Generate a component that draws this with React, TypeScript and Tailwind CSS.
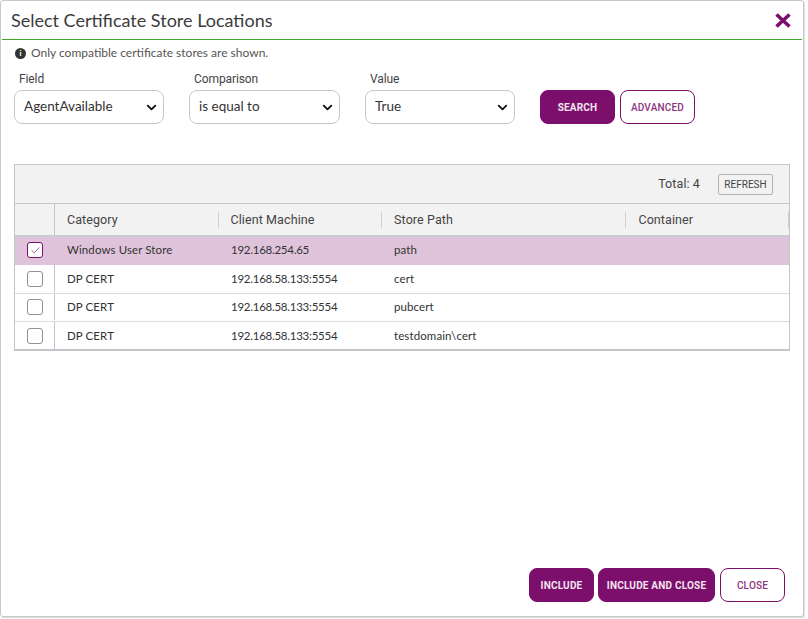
import { ChevronDown, Check } from "lucide-react";

const rows = [
  { category: "Windows User Store", machine: "192.168.254.65", path: "path", selected: true },
  { category: "DP CERT", machine: "192.168.58.133:5554", path: "cert", selected: false },
  { category: "DP CERT", machine: "192.168.58.133:5554", path: "pubcert", selected: false },
  { category: "DP CERT", machine: "192.168.58.133:5554", path: "testdomain\\cert", selected: false },
];

const rowHeights = ["h-[28px] pb-[2px]", "h-[29px] pb-[1px]", "h-[28px] pb-[1px]", "h-[27px]"];

const body = "font-['Lato',sans-serif]";
const narrow = "font-['Roboto',sans-serif]";

function Filter({ label, value, width, gap }: { label: string; value: string; width: string; gap: string }) {
  return (
    <div className={`${width} ${gap} shrink-0`}>
      <div className={`${narrow} h-[20px] pl-[5px] pt-[1px] text-[12px] leading-[16px] tracking-[-0.1px] text-[#444]`}>{label}</div>
      <div className={`${body} flex h-[34px] items-center justify-between rounded-[8px] border border-[#c8c8c8] bg-white pb-[2px] pl-[9px] pr-[4px] text-[13.5px] text-[#333]`}>
        <span>{value}</span>
        <ChevronDown size={15} strokeWidth={3} className="mt-[2px] text-[#111]" />
      </div>
    </div>
  );
}

function Button({ label, solid, width }: { label: string; solid?: boolean; width: string }) {
  return (
    <button
      className={`${narrow} ${width} h-[34px] rounded-[8px] border border-[#7d0f6c] text-[10px] tracking-[0.2px] ${
        solid ? "bg-[#7d0f6c] font-bold text-[#f3e4f0]" : "bg-white font-medium text-[#8f3480]"
      }`}
    >
      {label}
    </button>
  );
}

export default function App() {
  return (
    <div className="h-[619px] w-[808px] overflow-hidden bg-white">
      <div className="flex h-[617px] w-[804px] flex-col rounded-[3px] border border-[#c8c8c8] bg-white shadow-[1px_1px_1px_#dddddd]">
        <div className="mx-[1px] flex h-[39px] shrink-0 items-center justify-between border-b border-[#3fa82a] pl-[9px] pr-[11px]">
          <h1 className={`${body} text-[18px] text-[#3c3c3c]`}>Select Certificate Store Locations</h1>
          <svg width="16" height="15" viewBox="0 0 16 15">
            <path d="M1.5 1.5 L14.5 13.5 M14.5 1.5 L1.5 13.5" stroke="#7d0f6c" strokeWidth="3.6" />
          </svg>
        </div>

        <div className="flex min-h-0 flex-1 flex-col pl-[13px] pr-[13px]">
          <div className={`${body} mt-[5px] flex h-[16px] items-center gap-[5px] pl-[1px] text-[12px] text-[#555]`}>
            <span className="flex h-[11px] w-[11px] items-center justify-center rounded-full bg-[#333] text-[8px] font-bold text-white">i</span>
            Only compatible certificate stores are shown.
          </div>

          <div className="mt-[9px] flex items-end">
            <Filter label="Field" value="AgentAvailable" width="w-[150px]" gap="mr-[25px]" />
            <Filter label="Comparison" value="is equal to" width="w-[151px]" gap="mr-[25px]" />
            <Filter label="Value" value="True" width="w-[150px]" gap="mr-[25px]" />
            <Button label="SEARCH" solid width="w-[75px]" />
            <Button label="ADVANCED" width="ml-[5px] w-[75px]" />
          </div>

          <div className="mt-[40px] w-[776px] border border-b-2 border-[#c0c6c9]">
            <div className="flex h-[39px] items-center justify-end border-b border-[#c0c6c9] bg-[#f2f2f2] pr-[16px]">
              <span className={`${narrow} mr-[18px] text-[12.5px] tracking-[0.1px] text-[#444]`}>Total: 4</span>
              <button className={`${narrow} h-[21px] w-[55px] rounded-[2px] border border-[#b5b5b5] text-[10px] text-[#444]`}>REFRESH</button>
            </div>
            <div className={`${narrow} flex h-[33px] items-center border-b-2 border-[#c8cdd0] bg-[#f2f2f2] pt-[1px] text-[12.5px] tracking-[0.1px] text-[#444]`}>
              <div className="-mt-[1px] h-[32px] w-[40px] border-r border-[#c0c6c9]" />
              <div className="w-[164px] pl-[12px]">Category</div>
              <div className="h-[16px] w-px bg-[#d0d0d0]" />
              <div className="w-[162px] pl-[11px]">Client Machine</div>
              <div className="h-[16px] w-px bg-[#d0d0d0]" />
              <div className="w-[244px] pl-[12px]">Store Path</div>
              <div className="h-[16px] w-px bg-[#d0d0d0]" />
              <div className="w-[162px] pl-[12px]">Container</div>
              <div className="h-[16px] w-px bg-[#d0d0d0]" />
            </div>
            {rows.map((row, i) => (
              <div
                key={i}
                className={`${body} ${rowHeights[i]} flex items-center text-[11.5px] tracking-[0.1px] text-[#333] ${i === 0 ? "bg-[#dfc3da]" : "bg-white"} ${i > 0 && i < 3 ? "border-b border-[#d8dcde]" : ""}`}
              >
                <div className={`flex h-full w-[40px] items-center justify-center ${i === 0 ? "" : "border-r border-[#c0c6c9]"}`}>
                  <span
                    className={`flex h-[16px] w-[16px] items-center justify-center rounded-[3px] border ${
                      row.selected ? "border-[#7d0f6c] bg-white" : "border-[#8a9496] bg-white"
                    }`}
                  >
                    {row.selected && <Check size={11} strokeWidth={1.5} className="text-[#7d0f6c]" />}
                  </span>
                </div>
                <div className="w-[164px] pl-[12px]">{row.category}</div>
                <div className="w-[163px] pl-[12px] tracking-[-0.25px]">{row.machine}</div>
                <div className="pl-[12px]">{row.path}</div>
              </div>
            ))}
          </div>

          <div className="mb-[14px] mt-auto flex justify-end gap-[4px] pr-[5px]">
            <Button label="INCLUDE" solid width="w-[65px]" />
            <Button label="INCLUDE AND CLOSE" solid width="w-[117px]" />
            <Button label="CLOSE" width="ml-[1px] w-[65px]" />
          </div>
        </div>
      </div>
    </div>
  );
}
